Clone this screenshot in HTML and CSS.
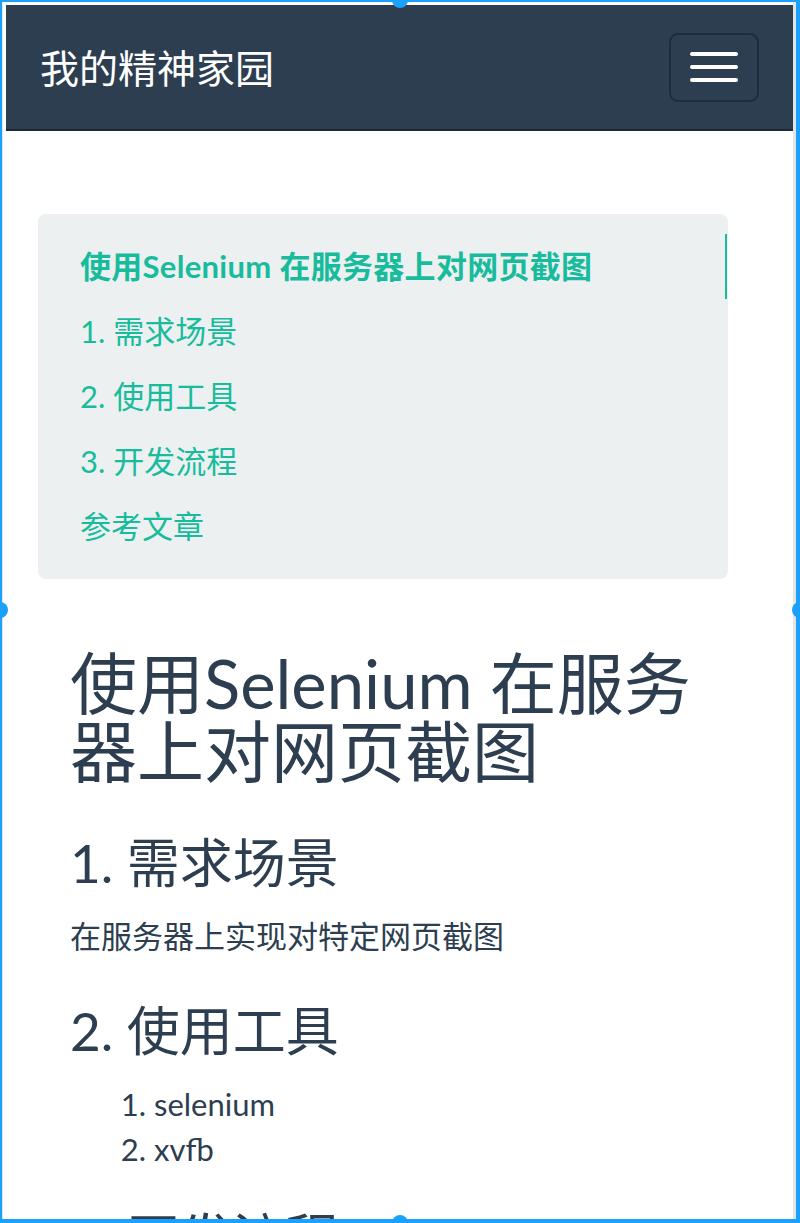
FILE: index.html
```html
<!DOCTYPE html>
<html lang="zh-CN">
<head>
<meta charset="utf-8">
<title>我的精神家园</title>
<link rel="stylesheet" href="styles.css">
</head>
<body>
<div class="frame">
  <div class="viewport">
    <nav class="navbar">
      <a class="brand" href="#">我的精神家园</a>
      <button class="toggler" type="button" aria-label="菜单">
        <span class="bar"></span>
        <span class="bar"></span>
        <span class="bar"></span>
      </button>
    </nav>
    <main class="page">
      <div class="toc">
        <a class="toc-link active" href="#t">使用Selenium 在服务器上对网页截图</a>
        <a class="toc-link" href="#s1">1. 需求场景</a>
        <a class="toc-link" href="#s2">2. 使用工具</a>
        <a class="toc-link" href="#s3">3. 开发流程</a>
        <a class="toc-link" href="#ref">参考文章</a>
      </div>
      <article class="post">
        <h1 id="t">使用Selenium 在服务器上对网页截图</h1>
        <h2 id="s1">1. 需求场景</h2>
        <p>在服务器上实现对特定网页截图</p>
        <h2 id="s2">2. 使用工具</h2>
        <ol>
          <li>selenium</li>
          <li>xvfb</li>
        </ol>
        <h2 id="s3">3. 开发流程</h2>
      </article>
    </main>
  </div>
  <span class="handle handle-top"></span>
  <span class="handle handle-left"></span>
  <span class="handle handle-right"></span>
  <span class="handle handle-bottom"></span>
</div>
</body>
</html>
```
FILE: styles.css
```css
html, body {
  margin: 0;
  padding: 0;
  background: #ffffff;
}

body {
  font-family: Lato, "Noto Sans CJK SC", sans-serif;
  color: #2c3e50;
}

.frame {
  position: relative;
  width: 800px;
  height: 1223px;
  box-sizing: border-box;
  border-style: solid;
  border-color: #1ba0fb;
  border-width: 2px 4px 4px 2px;
}

.viewport {
  height: 100%;
  box-sizing: border-box;
  overflow: hidden;
  background: #ffffff;
  border-left: 1px solid #e2e5e8;
  border-right: 3px solid #e2e5e8;
  padding: 3px 0 0 3px;
}

.navbar {
  display: flex;
  align-items: center;
  justify-content: space-between;
  height: 124px;
  padding: 0 34px;
  background: #2c3e50;
  border-bottom: 2px solid #1c2835;
}

.brand {
  color: #ffffff;
  text-decoration: none;
  font-size: 39px;
  line-height: 1;
  padding-top: 2px;
}

.toggler {
  display: flex;
  flex-direction: column;
  justify-content: center;
  align-items: center;
  gap: 9px;
  width: 90px;
  height: 69px;
  box-sizing: border-box;
  padding: 0;
  background: transparent;
  border: 2px solid #1f2c3a;
  border-radius: 9px;
}

.bar {
  display: block;
  width: 48px;
  height: 4px;
  border-radius: 2px;
  background: #ffffff;
}

.page {
  padding: 83px 0 0 32px;
}

.toc {
  width: 690px;
  box-sizing: border-box;
  padding: 20px 0 20px 0;
  background: #ecf0f1;
  border-radius: 8px;
}

.toc-link {
  display: block;
  padding-left: 42px;
  line-height: 65px;
  font-size: 31px;
  color: #18bc9c;
  text-decoration: none;
  border-right: 2px solid transparent;
  margin-right: 1px;
}

.toc-link.active {
  font-weight: 700;
  letter-spacing: 0.3px;
  border-right-color: #18bc9c;
}

.post {
  width: 626px;
  padding: 0 32px;
}

.post h1 {
  margin: 70px 0 46px;
  font-size: 67px;
  font-weight: 400;
  line-height: 68px;
}

.post h2 {
  margin: 0 0 19px;
  font-size: 53px;
  font-weight: 400;
  line-height: 64px;
}

.post p {
  margin: 0 0 40px;
  font-size: 31px;
  line-height: 45px;
}

.post ol {
  margin: 0 0 34px;
  padding-left: 84px;
  font-size: 31px;
  line-height: 45px;
}

.handle {
  position: absolute;
  width: 16px;
  height: 16px;
  border-radius: 50%;
  background: #1ba0fb;
}

.handle-top {
  top: -10px;
  left: 390px;
}

.handle-bottom {
  bottom: -12px;
  left: 390px;
}

.handle-left {
  left: -10px;
  top: 600px;
}

.handle-right {
  right: -12px;
  top: 600px;
}
```
